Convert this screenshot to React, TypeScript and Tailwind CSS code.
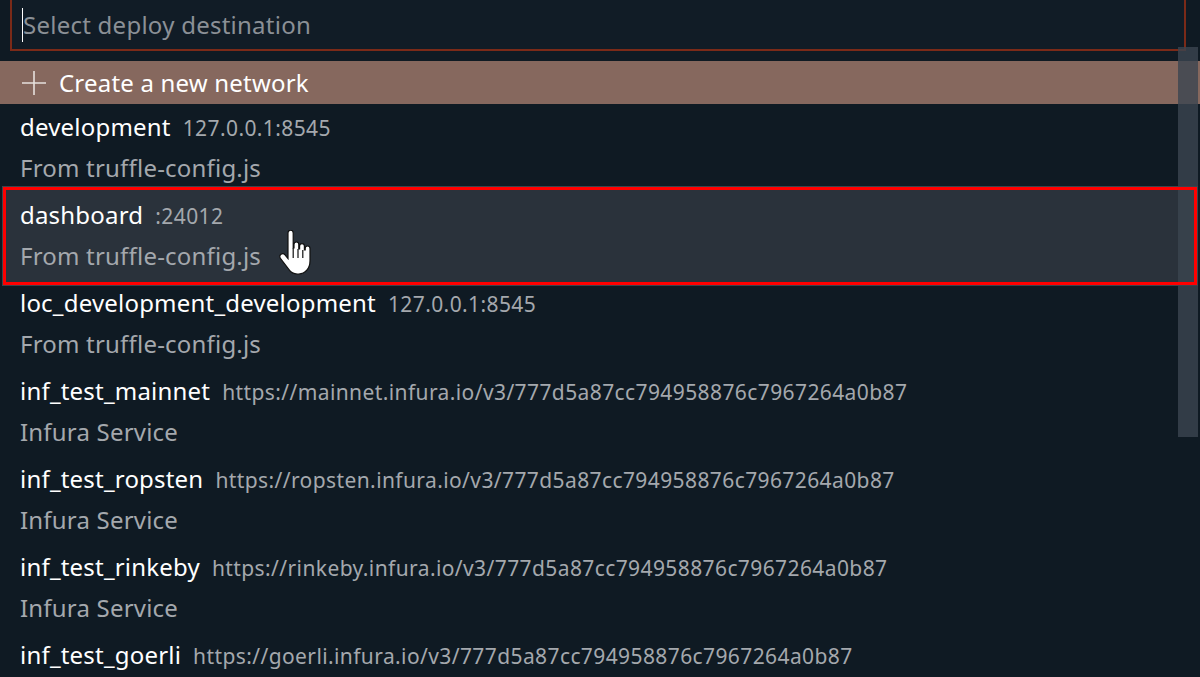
import React from 'react';

const items = [
  { name: 'development', addr: '127.0.0.1:8545', desc: 'From truffle-config.js' },
  { name: 'dashboard', addr: ':24012', desc: 'From truffle-config.js', active: true },
  { name: 'loc_development_development', addr: '127.0.0.1:8545', desc: 'From truffle-config.js' },
  { name: 'inf_test_mainnet', addr: 'https://mainnet.infura.io/v3/777d5a87cc794958876c7967264a0b87', desc: 'Infura Service' },
  { name: 'inf_test_ropsten', addr: 'https://ropsten.infura.io/v3/777d5a87cc794958876c7967264a0b87', desc: 'Infura Service' },
  { name: 'inf_test_rinkeby', addr: 'https://rinkeby.infura.io/v3/777d5a87cc794958876c7967264a0b87', desc: 'Infura Service' },
  { name: 'inf_test_goerli', addr: 'https://goerli.infura.io/v3/777d5a87cc794958876c7967264a0b87', desc: 'Infura Service' },
];

const HandCursor = () => (
  <svg width="36" height="48" viewBox="0 0 18 24" className="absolute left-[278px] top-[38px]">
    <path
      d="M5 1.5c0-.8.6-1.4 1.3-1.4s1.3.6 1.3 1.4V9h.4V7.2c0-.7.6-1.2 1.2-1.2s1.2.5 1.2 1.2V9.5h.4V8c0-.7.6-1.2 1.2-1.2s1.2.5 1.2 1.2v2h.4V9.2c0-.7.5-1.2 1.2-1.2s1.2.5 1.2 1.2v6.3c0 3.6-2.4 6.5-5.6 6.5H9.6c-1.8 0-3.2-.9-4.2-2.3L1.2 14.2c-.5-.7-.4-1.6.3-2.1.6-.4 1.5-.3 2 .3L5 14.3V1.5z"
      fill="#ffffff"
      stroke="#111"
      strokeWidth="0.6"
    />
    <path d="M7.6 9v5M10 9.5v4.5M12.4 10v4" stroke="#111" strokeWidth="0.6" />
  </svg>
);

const App = () => {
  return (
    <div
      className="relative w-[1200px] h-[677px] overflow-hidden bg-[#0f1a23]"
      style={{ fontFamily: '"Noto Sans", "Open Sans", sans-serif' }}
    >
      {/* input */}
      <div className="ml-[10px] mr-[14px] h-[51px] border-2 border-t-0 border-[#7b2a18] bg-[#111c26] flex items-center pl-[10px]">
        <div className="w-px h-[34px] bg-white" />
        <span className="text-[24px] text-[#8b9096] tracking-[0.25px]">Select deploy destination</span>
      </div>

      {/* create row */}
      <div className="mt-[10px] h-[43px] bg-[#86685e] flex items-center pl-[20px]">
        <svg width="28" height="28" viewBox="0 0 28 28" className="mr-[11px]">
          <path d="M14 2v24M2 14h24" stroke="#e6e0dd" strokeWidth="1.6" />
        </svg>
        <span className="text-[24px] text-white tracking-[0.2px]">Create a new network</span>
      </div>

      {/* list */}
      <div>
        {items.map((it) => (
          <div key={it.name} className="relative h-[88px]">
            {it.active && (
              <>
                <div className="absolute left-[3px] right-[3px] -top-[5px] -bottom-[5px] bg-[#2a323b] outline outline-1 outline-[#3c444c]" />
                <div className="absolute z-10 left-[3px] right-[3px] -top-[5px] -bottom-[5px] border-[3px] border-[#ff0000]" />
              </>
            )}
            <div className="relative pl-[20px] pt-[7px]">
              <div className="flex items-baseline h-[32px] leading-[32px]">
                <span className="text-[24px] text-white tracking-[0.2px]">{it.name}</span>
                <span className="ml-[12px] text-[21px] text-[#a4a8ad] tracking-[0.4px]">{it.addr}</span>
              </div>
              <div className="mt-[10px] text-[24px] text-[#a4a8ad] tracking-[0.2px] leading-[30px]">{it.desc}</div>
              {it.active && <HandCursor />}
            </div>
          </div>
        ))}
      </div>

      {/* scrollbar */}
      <div className="absolute left-[1178px] top-[47px] w-[20px] h-[390px] bg-[#3b4550] opacity-80" />
    </div>
  );
};

export default App;
